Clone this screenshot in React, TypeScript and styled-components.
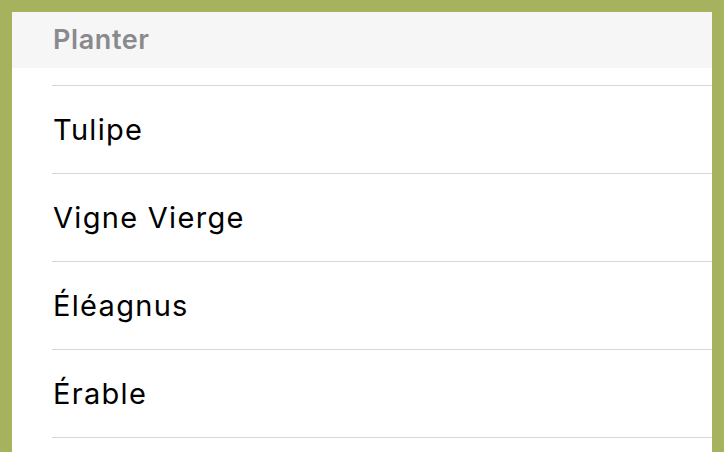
import { createGlobalStyle } from 'styled-components';
import styled from 'styled-components';

const GlobalStyle = createGlobalStyle`
  html, body {
    margin: 0;
    padding: 0;
    background: #a6b25e;
    height: 100%;
    overflow: hidden;
  }
  body {
    font-family: Inter, "Noto Sans", "Liberation Sans", sans-serif;
  }
`

const Frame = styled.div`
  padding: 12px 12px 0 12px;
  height: 452px;
  box-sizing: border-box;
`

const Panel = styled.div`
  background: #ffffff;
  height: 100%;
  display: flex;
  flex-direction: column;
`

const SectionHeader = styled.div`
  height: 56px;
  background: #f6f6f6;
  display: flex;
  align-items: center;
  padding-left: 41px;
  padding-bottom: 2px;
  box-sizing: border-box;
  font-size: 27px;
  font-weight: 600;
  color: #8a8a8e;
  letter-spacing: 0.6px;
`

const List = styled.div`
  margin-top: 17px;
  margin-left: 40px;
  border-top: 1px solid #d6d6d6;
`

const Row = styled.div`
  height: 87px;
  border-bottom: 1px solid #d6d6d6;
  display: flex;
  align-items: center;
  padding-left: 1px;
  font-size: 29px;
  letter-spacing: 1.3px;
  color: #000000;
`

const plants = ['Tulipe', 'Vigne Vierge', 'Éléagnus', 'Érable'];

const App = () => {
  return (
    <Frame>
      <GlobalStyle />
      <Panel>
        <SectionHeader>Planter</SectionHeader>
        <List>
          {plants.map((name) => (
            <Row key={name}>{name}</Row>
          ))}
        </List>
      </Panel>
    </Frame>
  )
}

export default App;
